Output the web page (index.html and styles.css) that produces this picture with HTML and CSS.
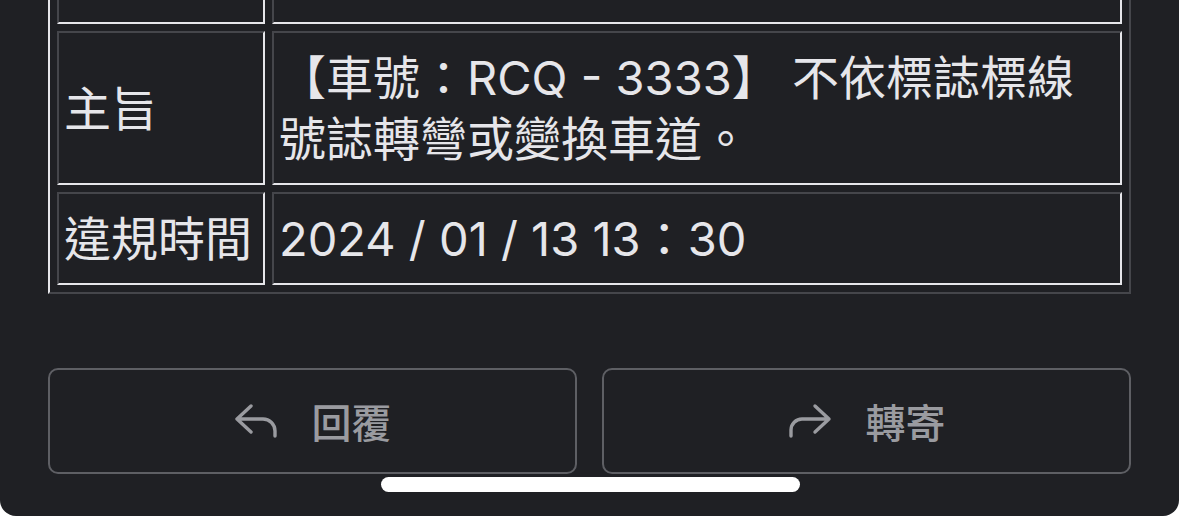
FILE: index.html
```html
<!DOCTYPE html>
<html lang="zh-Hant">
<head>
<meta charset="utf-8">
<title>違規通知</title>
<link rel="stylesheet" href="styles.css">
</head>
<body>
<div class="screen">
  <div class="content">
    <table class="info">
      <tr class="row-cut">
        <td class="label"></td>
        <td class="value"></td>
      </tr>
      <tr>
        <td class="label">主旨</td>
        <td class="value"><span class="line">【車號：RCQ - 3333】 不依標誌標線</span><span class="line">號誌轉彎或變換車道。</span></td>
      </tr>
      <tr>
        <td class="label">違規時間</td>
        <td class="value">2024 / 01 / 13 13：30</td>
      </tr>
    </table>
    <div class="actions">
      <button class="btn" type="button">
        <svg class="icon" width="46" height="36" viewBox="0 0 46 36" aria-hidden="true">
          <path d="M17 3 L3 16 L17 29 M3 16 H29 A12 12 0 0 1 41 28 V33" fill="none" stroke="currentColor" stroke-width="3.4" stroke-linecap="round" stroke-linejoin="round"/>
        </svg>
        <span>回覆</span>
      </button>
      <button class="btn" type="button">
        <svg class="icon" width="46" height="36" viewBox="0 0 46 36" aria-hidden="true">
          <path d="M27 3 L41 16 L27 29 M41 16 H14 A11 11 0 0 0 3 27 V33" fill="none" stroke="currentColor" stroke-width="3.4" stroke-linecap="round" stroke-linejoin="round"/>
        </svg>
        <span>轉寄</span>
      </button>
    </div>
  </div>
  <div class="home-indicator"></div>
</div>
</body>
</html>
```

FILE: styles.css
```css
html {
  background: #ffffff;
}
body {
  margin: 0;
  background: #ffffff;
  font-family: "Noto Sans CJK TC", "Noto Sans CJK SC", sans-serif;
}
.screen {
  position: relative;
  width: 1179px;
  height: 516px;
  background: #1f2024;
  border-radius: 0 0 16px 16px;
  overflow: hidden;
}
.content {
  padding: 0 48px;
}
.info {
  margin-top: -45px;
  width: 1083px;
  table-layout: fixed;
  border-collapse: separate;
  border-spacing: 7px;
  border-style: solid;
  border-width: 2px;
  border-color: #e6e6ea #45464b #45464b #e6e6ea;
  color: #e6e6ea;
  font-family: "Inter", "Noto Sans CJK TC", "Noto Sans CJK SC", sans-serif;
  font-size: 47px;
  line-height: 61px;
}
.info td {
  box-sizing: border-box;
  border-style: solid;
  border-width: 2px;
  border-color: #45464b #e6e6ea #e6e6ea #45464b;
  padding: 14px 5px;
  vertical-align: middle;
}
.info td.label {
  width: 208px;
  white-space: nowrap;
}
.info .line {
  display: block;
  white-space: nowrap;
}
.row-cut td {
  height: 60px;
}
.actions {
  display: flex;
  gap: 25px;
  margin-top: 74px;
}
.btn {
  flex: 1;
  height: 106px;
  box-sizing: border-box;
  border: 2px solid #5e5f64;
  border-radius: 10px;
  background: transparent;
  color: #9a9ba0;
  font-family: "Noto Sans CJK TC", "Noto Sans CJK SC", sans-serif;
  font-size: 40px;
  font-weight: 500;
  display: flex;
  align-items: center;
  justify-content: center;
  gap: 32px;
  padding: 0;
}
.icon {
  display: block;
}
.home-indicator {
  position: absolute;
  left: 381px;
  top: 477px;
  width: 419px;
  height: 15px;
  border-radius: 8px;
  background: #ffffff;
}
```
